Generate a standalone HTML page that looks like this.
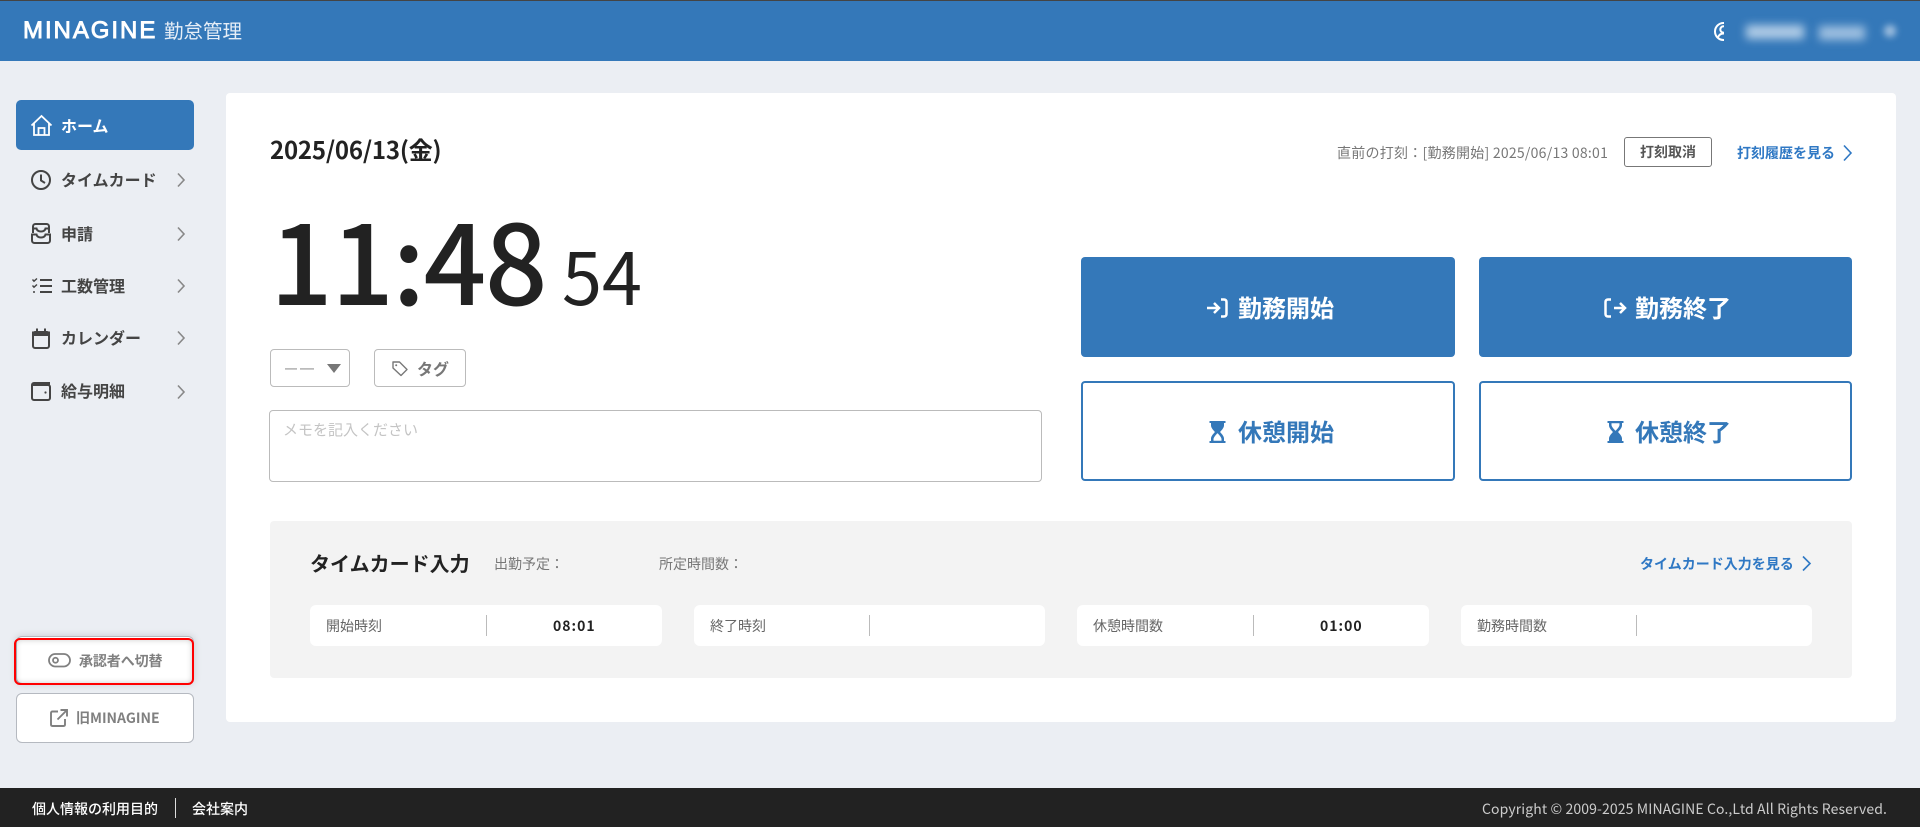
<!DOCTYPE html>
<html lang="ja"><head><meta charset="utf-8"><title>MINAGINE 勤怠管理</title>
<style>
*{box-sizing:border-box;margin:0;padding:0}
html,body{width:1920px;height:827px;overflow:hidden;background:#ebeef3;font-family:"Liberation Sans","Noto Sans CJK JP",sans-serif}
body{position:relative;font-family:"Noto Sans CJK JP","Liberation Sans",sans-serif;color:#222}
.a,.t{position:absolute}
.t{white-space:nowrap;line-height:30px;height:30px}
svg{position:absolute;overflow:visible}
.m{font-size:16px;font-weight:700;color:#444;left:61px}
.ch{fill:none;stroke:#888;stroke-width:1.6}
.ic{fill:none;stroke:#444;stroke-width:2}
.lb{font-size:14px;color:#666;top:611px}
.val{font-size:14px;font-weight:700;letter-spacing:1px;top:611px;color:#222}
.box{background:#fff;border-radius:6px;top:605px;height:41px}
.dv{background:#bbb;width:1px;top:615px;height:21px}
.b{font-size:24px;font-weight:700;letter-spacing:0}
.link{font-size:14px;font-weight:700;color:#2f78c4}
</style></head><body>
<div class="a" style="left:0;top:0;width:1920px;height:61px;background:#3478b9;border-top:1px solid #444"></div>
<div class="t" style="left:23px;top:16px;font-family:'Liberation Sans',sans-serif;font-size:24px;font-weight:400;-webkit-text-stroke:.9px #fff;color:#fff;letter-spacing:1.95px">MINAGINE</div>
<div class="t" style="left:164px;top:15px;font-size:19.5px;color:#e6eef7">勤怠管理</div>

<svg style="left:1714px;top:22px" width="20" height="20" viewBox="0 0 20 20" fill="none" stroke="#fff" stroke-width="2"><circle cx="9.500" cy="9.500" r="8.500"/><circle cx="9.500" cy="7.500" r="3.200"/><path d="M4 15.500c1-3 3-4 5.500-4s4.500 1 5.500 4"/></svg>
<div class="a" style="left:1724px;top:12px;width:196px;height:49px;background:#3478b9;overflow:hidden">
 <div class="a" style="left:22px;top:13px;width:58px;height:14px;background:#afcbe6;filter:blur(4.500px)"></div>
 <div class="a" style="left:95px;top:14px;width:46px;height:14px;background:#9dbfe0;filter:blur(4.500px)"></div>
 <div class="a" style="left:160px;top:13px;width:12px;height:12px;background:#a2c1e0;border-radius:6px;filter:blur(3.500px)"></div>
</div>

<div class="a" style="left:16px;top:100px;width:178px;height:50px;background:#3478b9;border-radius:5px"></div>
<svg style="left:30px;top:114px" width="23" height="23" viewBox="0 0 23 23" fill="none" stroke="#fff" stroke-width="1.800"><path d="M1.500 11.500 11.500 2l10 9.500"/><path d="M4 9.500V21h15V9.500"/><path d="M8.500 21v-7h6v7"/></svg>
<div class="t m" style="top:110px;color:#fff">ホーム</div>

<svg class="ic" style="left:31px;top:170px" width="20" height="20" viewBox="0 0 20 20" stroke-width="2"><circle cx="10" cy="10" r="9"/><path d="M10 4.500V10.500l4 2.500"/></svg>
<div class="t m" style="top:164px">タイムカード</div>
<svg class="ch" style="left:177px;top:173px" width="8" height="14"><path d="M1 0.500 7 7 1 13.500"/></svg>

<svg class="ic" style="left:31px;top:223px" width="20" height="21" viewBox="0 0 20 21" stroke-width="1.800"><path d="M2 10V3.500C2 2 3 1 4.500 1h11C17 1 18 2 18 3.500V10"/><path d="M2 5.500h3.500c.5 2 1.800 3 4.500 3s4-1 4.500-3H18"/><path d="M1 11.500h4.500c.5 2 2 3 4.500 3s4-1 4.500-3H19v6c0 1.500-1 2.500-2.500 2.500h-13C2 20 1 19 1 17.500z"/></svg>
<div class="t m" style="top:218px">申請</div>
<svg class="ch" style="left:177px;top:227px" width="8" height="14"><path d="M1 0.500 7 7 1 13.500"/></svg>

<svg class="ic" style="left:32px;top:278px" width="20" height="16" viewBox="0 0 20 16" stroke-width="1.800"><path d="M8 2h12M8 8h12M8 14h12"/><path d="M0.500 1.500 2 3.200 5 0.500M0.500 7.500 2 9.200 5 6.500" stroke-width="1.400"/><circle cx="2" cy="14" r="1" fill="#444" stroke="none"/></svg>
<div class="t m" style="top:270px">工数管理</div>
<svg class="ch" style="left:177px;top:279px" width="8" height="14"><path d="M1 0.500 7 7 1 13.500"/></svg>

<svg class="ic" style="left:32px;top:328px" width="18" height="21" viewBox="0 0 18 21"><rect x="1" y="4" width="16" height="16" rx="2"/><path d="M1 7h16v-2.500H1z" fill="#444"/><path d="M5 0.500V4M13 0.500V4"/></svg>
<div class="t m" style="top:322px">カレンダー</div>
<svg class="ch" style="left:177px;top:331px" width="8" height="14"><path d="M1 0.500 7 7 1 13.500"/></svg>

<svg class="ic" style="left:31px;top:382px" width="20" height="19" viewBox="0 0 20 19" stroke-width="1.800"><path d="M18 3V1H3C1.800 1 1 1.800 1 3v13c0 1.200.8 2 2 2h14c1.200 0 2-.8 2-2V5c0-1.200-.8-2-2-2H1"/><circle cx="14.500" cy="10.500" r="1.100" fill="#444" stroke="none"/></svg>
<div class="t m" style="top:375px">給与明細</div>
<svg class="ch" style="left:177px;top:385px" width="8" height="14"><path d="M1 0.500 7 7 1 13.500"/></svg>

<div class="a" style="left:16px;top:636px;width:178px;height:48px;background:#fff;border:1px solid #b5b9c0;border-radius:6px;box-shadow:0 0 8px rgba(0,0,0,.15)"></div>
<div class="a" style="left:14px;top:638px;width:180px;height:47px;border:2px solid #f00;border-radius:6px;box-shadow:inset 0 0 6px rgba(0,0,0,.2)"></div>
<svg style="left:48px;top:653px" width="23" height="15" viewBox="0 0 23 15" fill="none" stroke="#808080" stroke-width="1.800"><rect x="1" y="1" width="21" height="12.500" rx="6.250"/><circle cx="7.500" cy="7.250" r="2.500"/></svg>
<div class="t" style="left:79px;top:646px;font-size:14px;font-weight:700;color:#808080;letter-spacing:-.1px">承認者へ切替</div>

<div class="a" style="left:16px;top:693px;width:178px;height:50px;background:#fff;border:1px solid #b5b9c0;border-radius:6px"></div>
<svg style="left:50px;top:709px" width="18" height="18" viewBox="0 0 18 18" fill="none" stroke="#808080" stroke-width="1.900"><path d="M8 2.500H2.500C1.500 2.500 1 3 1 4v11.500c0 1 .5 1.500 1.500 1.500h11c1 0 1.500-.5 1.500-1.500V10"/><path d="M7.500 10.500 16.500 1.500M10.500 1h6.500v6.500"/></svg>
<div class="t" style="left:76px;top:703px;font-size:14px;font-weight:700;color:#808080">旧MINAGINE</div>

<div class="a" style="left:226px;top:93px;width:1670px;height:629px;background:#fff;border-radius:4px"></div>

<div class="t" style="left:270px;top:134px;font-size:24px;font-weight:700;color:#222;letter-spacing:-.2px">2025/06/13(金)</div>
<div class="t" style="left:1337px;top:138px;font-size:14px;color:#777;letter-spacing:.25px">直前の打刻：[勤務開始] 2025/06/13 08:01</div>
<div class="a" style="left:1624px;top:137px;width:88px;height:30px;border:1px solid #777;border-radius:3px"></div>
<div class="t" style="left:1640px;top:137px;font-size:14px;font-weight:700;color:#555">打刻取消</div>
<div class="t link" style="left:1737px;top:138px">打刻履歴を見る</div>
<svg style="left:1843px;top:145px" width="9" height="16" fill="none" stroke="#2f78c4" stroke-width="1.600"><path d="M1 0.500 8 8 1 15.500"/></svg>

<div class="t" style="left:270px;top:177px;height:160px;line-height:160px;font-size:110px;font-weight:500;color:#222;letter-spacing:-1.500px">11:48</div>
<div class="t" style="left:562px;top:224px;height:100px;line-height:100px;font-size:72px;color:#222">54</div>

<div class="a" style="left:270px;top:349px;width:80px;height:38px;border:1px solid #bbb;border-radius:4px"></div>
<div class="a" style="left:285px;top:368px;width:12px;height:1px;background:#bbb;box-shadow:0 1px 0 #ccc"></div>
<div class="a" style="left:300px;top:368px;width:14px;height:1px;background:#bbb;box-shadow:0 1px 0 #ccc"></div>
<svg style="left:327px;top:364px" width="14" height="9"><path d="M0 0h14L7 9z" fill="#777"/></svg>
<div class="a" style="left:374px;top:349px;width:92px;height:38px;border:1px solid #bbb;border-radius:4px"></div>
<svg style="left:392px;top:361px" width="16" height="15" viewBox="0 0 16 15" fill="none" stroke="#777" stroke-width="1.400"><path d="M1 1h6.500L15 8.500 9 14.500 1 7z" stroke-linejoin="round"/><circle cx="4.200" cy="4.200" r="1" fill="#777" stroke="none"/></svg>
<div class="t" style="left:417px;top:353px;font-size:16px;font-weight:700;color:#777">タグ</div>

<div class="a" style="left:269px;top:410px;width:773px;height:72px;border:1.500px solid #bbb;border-radius:4px"></div>
<div class="t" style="left:283px;top:415px;font-size:15px;color:#c4c4c4">メモを記入ください</div>

<div class="a" style="left:1081px;top:257px;width:374px;height:100px;background:#3478b9;border-radius:4px"></div>
<div class="a" style="left:1479px;top:257px;width:373px;height:100px;background:#3478b9;border-radius:4px"></div>
<div class="a" style="left:1081px;top:381px;width:374px;height:100px;border:2px solid #3478b9;border-radius:4px"></div>
<div class="a" style="left:1479px;top:381px;width:373px;height:100px;border:2px solid #3478b9;border-radius:4px"></div>

<svg style="left:1207px;top:298px" width="21" height="20" viewBox="0 0 21 20" fill="none" stroke="#fff" stroke-width="2.500"><path d="M0 10h11M7 5l5 5-5 5"/><path d="M14 1.500h3c1.500 0 2.500 1 2.500 2.500v12c0 1.500-1 2.500-2.500 2.500h-3"/></svg>
<svg style="left:1604px;top:298px" width="21" height="20" viewBox="0 0 21 20" fill="none" stroke="#fff" stroke-width="2.500"><path d="M7 1.500H4C2.500 1.500 1.500 2.500 1.500 4v12c0 1.500 1 2.500 2.500 2.500h3"/><path d="M10 10h11M16 5l5 5-5 5"/></svg>
<div class="t b" style="left:1238px;top:292px;color:#fff">勤務開始</div>
<div class="t b" style="left:1635px;top:292px;color:#fff">勤務終了</div>

<svg style="left:1209px;top:421px" width="17" height="22" viewBox="0 0 17 22"><path d="M0.500 0h16v2h-1.500v2.500c0 2-2 4.500-4 6.500 2 2 4 4.500 4 6.500V20h1.500v2h-16v-2H2v-2.500c0-2 2-4.500 4-6.500-2-2-4-4.500-4-6.500V2H0.500z" fill="#3478b9"/><path d="M4.500 18v1.800h8V18c0-1.500-2.500-4.500-4-5.800-1.500 1.300-4 4.300-4 5.800z" fill="#fff"/></svg>
<svg style="left:1607px;top:421px" width="17" height="22" viewBox="0 0 17 22"><path d="M0.500 0h16v2h-1.500v2.500c0 2-2 4.500-4 6.500 2 2 4 4.500 4 6.500V20h1.500v2h-16v-2H2v-2.500c0-2 2-4.500 4-6.500-2-2-4-4.500-4-6.500V2H0.500z" fill="#3478b9"/><path d="M4.500 2.200V4c0 1.500 2.500 4.500 4 5.800 1.500-1.300 4-4.300 4-5.800V2.200z" fill="#fff"/></svg>
<div class="t b" style="left:1238px;top:416px;color:#3478b9">休憩開始</div>
<div class="t b" style="left:1635px;top:416px;color:#3478b9">休憩終了</div>

<div class="a" style="left:270px;top:521px;width:1582px;height:157px;background:#f3f3f3;border-radius:4px"></div>
<div class="t" style="left:310px;top:548px;font-size:20px;font-weight:700;color:#222">タイムカード入力</div>
<div class="t" style="left:494px;top:549px;font-size:14px;color:#777">出勤予定：</div>
<div class="t" style="left:659px;top:549px;font-size:14px;color:#777">所定時間数：</div>
<div class="t link" style="left:1640px;top:549px">タイムカード入力を見る</div>
<svg style="left:1802px;top:556px" width="9" height="15" fill="none" stroke="#2f78c4" stroke-width="1.600"><path d="M1 0.500 8 7.500 1 14.500"/></svg>

<div class="a box" style="left:310px;width:352px"></div>
<div class="a box" style="left:694px;width:351px"></div>
<div class="a box" style="left:1077px;width:352px"></div>
<div class="a box" style="left:1461px;width:351px"></div>
<div class="a dv" style="left:486px"></div>
<div class="a dv" style="left:869px"></div>
<div class="a dv" style="left:1253px"></div>
<div class="a dv" style="left:1636px"></div>
<div class="t lb" style="left:326px">開始時刻</div>
<div class="t val" style="left:553px">08:01</div>
<div class="t lb" style="left:710px">終了時刻</div>
<div class="t lb" style="left:1093px">休憩時間数</div>
<div class="t val" style="left:1320px">01:00</div>
<div class="t lb" style="left:1477px">勤務時間数</div>

<div class="a" style="left:0;top:788px;width:1920px;height:39px;background:#222"></div>
<div class="t" style="left:32px;top:794px;font-size:14px;font-weight:500;color:#fff">個人情報の利用目的</div>
<div class="a" style="left:175px;top:798px;width:1px;height:20px;background:#ddd"></div>
<div class="t" style="left:192px;top:794px;font-size:14px;font-weight:500;color:#fff">会社案内</div>
<div class="t" style="right:33px;top:794px;font-size:14px;color:#ccc;letter-spacing:.11px">Copyright © 2009-2025 MINAGINE Co.,Ltd All Rights Reserved.</div>
</body></html>
